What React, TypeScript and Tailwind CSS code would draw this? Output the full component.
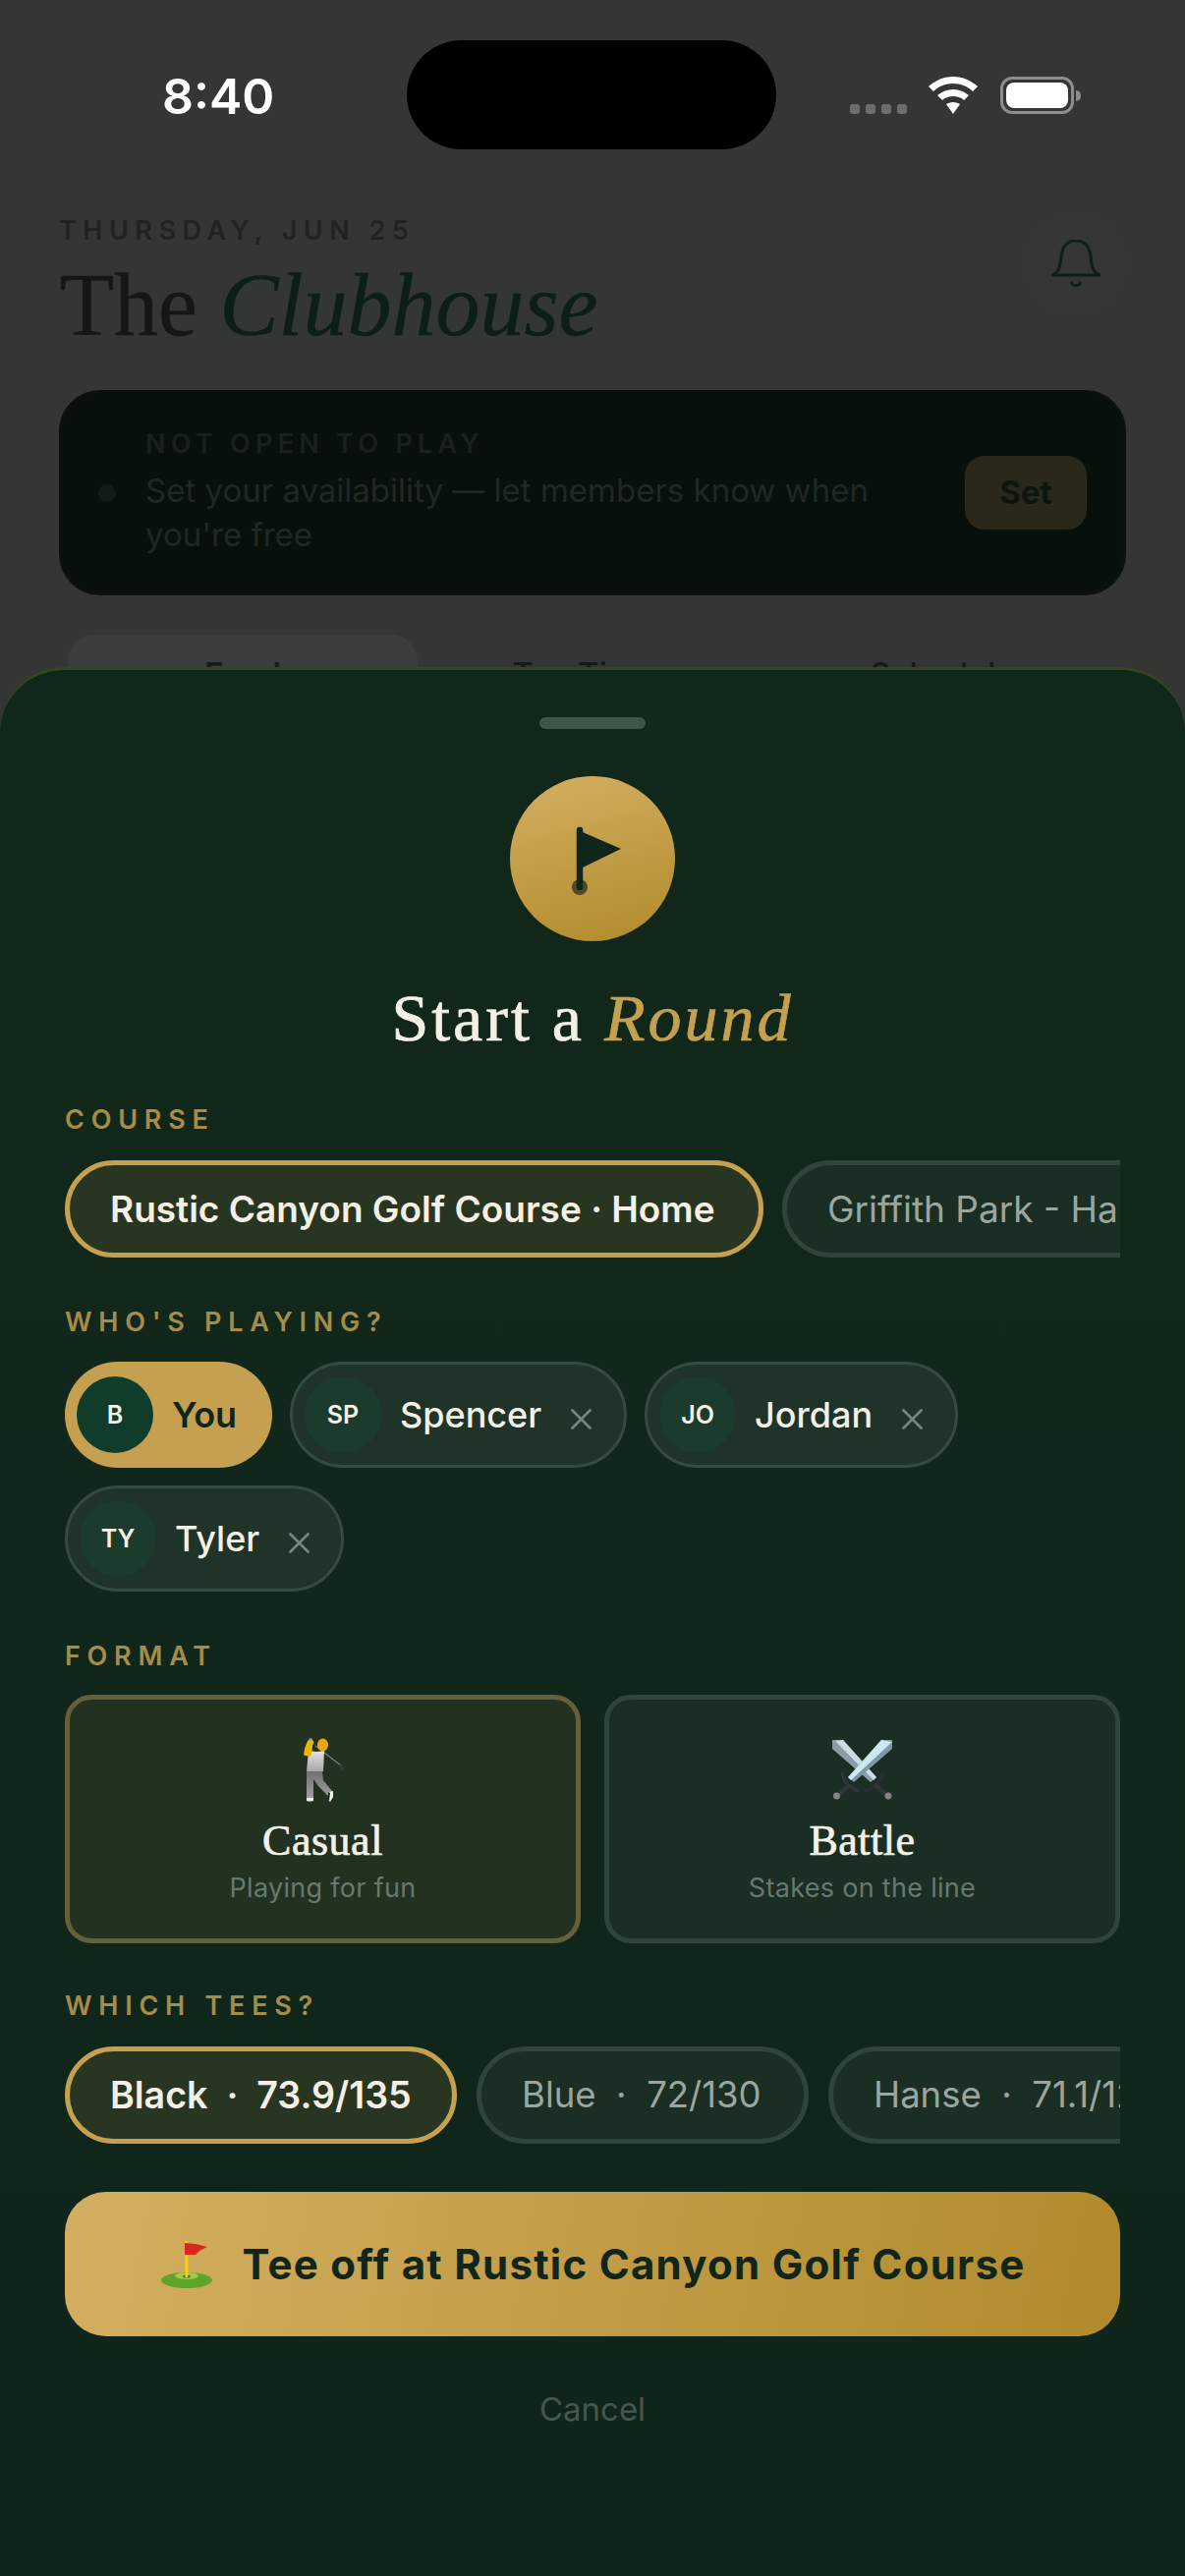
import React from "react";

const F = { fontFamily: '"Inter", "Liberation Sans", sans-serif' };
const S = { fontFamily: '"Liberation Serif", serif' };

function Golfer() {
  return (
    <svg viewBox="0 0 42 65" className="w-[42px] h-[65px]">
      <defs>
        <linearGradient id="shirt" x1="0" y1="0" x2="0" y2="1">
          <stop offset="0" stopColor="#e4e4e2" />
          <stop offset="1" stopColor="#a6a6a6" />
        </linearGradient>
        <linearGradient id="pants" x1="0" y1="0" x2="0" y2="1">
          <stop offset="0" stopColor="#6f7070" />
          <stop offset="1" stopColor="#a2a2a2" />
        </linearGradient>
      </defs>
      <path d="M13 8 L39 28" stroke="#79817f" strokeWidth="1.300" fill="none" />
      <path d="M38 27 l3 1 -.5 5 -2 -.5z" fill="#3a3d42" />
      <path d="M6 13 L14 14 L22 13 L21 34 L4 34z" fill="url(#shirt)" />
      <path d="M4 34 L20 34 L21 43 L30 54 L26 59 L16 49 L11 42 L11 63 L4 63z" fill="url(#pants)" />
      <path d="M4 61 h7 v3 q-4 1 -7 0z" fill="#ecece8" />
      <path d="M27 55 l4 -1 0 6 -3 5 -2 -2z" fill="#f3f3f0" />
      <path d="M26 55 l2 1 -1 8 -1 -1z" fill="#1f2022" />
      <ellipse cx="20.500" cy="7" rx="5.500" ry="6.500" fill="#efa70d" />
      <path d="M5 3 L9 1 L11.500 4 L10 8 L9.500 14 L8 19 L1 17.500 L2 11z" fill="#e8b508" />
      <path d="M6.500 0.500 L9.500 0.500 L10 3 L6.500 3.500z" fill="#a9a99c" />
    </svg>
  );
}

function Swords() {
  return (
    <svg viewBox="0 0 62 62" className="w-[62px] h-[62px]">
      <path d="M0 0 L11 0 L45 38 L39 43 L0 9z" fill="#8a9da6" />
      <path d="M3 1 L42 41 L45 38 L11 0z" fill="#c9dbe3" />
      <path d="M10 33 C11 42 17 49 28 52" stroke="#33343b" strokeWidth="3" fill="none" />
      <path d="M51 33 C50 42 44 49 33 52" stroke="#2b2c33" strokeWidth="3" fill="none" />
      <path d="M43 45 L55 56" stroke="#33343b" strokeWidth="4.500" />
      <path d="M18 45 L7 56" stroke="#33343b" strokeWidth="4.500" />
      <circle cx="57" cy="57" r="3.500" fill="#8b7f83" />
      <circle cx="4.500" cy="57" r="3.500" fill="#8b7f83" />
      <path d="M61 0 L50 0 L16 38 L22 43 L61 9z" fill="#7f98a5" />
      <path d="M50 0 L16 38 L19 41 L61 2z" fill="#cfe7f2" />
    </svg>
  );
}

function FlagHole() {
  return (
    <svg viewBox="0 0 56 48" className="w-[56px] h-[48px]">
      <ellipse cx="28" cy="40" rx="26" ry="8" fill="#5da52a" />
      <ellipse cx="28" cy="35.500" rx="12" ry="3.500" fill="#9fcb4a" />
      <ellipse cx="28" cy="36" rx="4" ry="1.500" fill="#55702a" />
      <rect x="26.500" y="0" width="2.800" height="37" fill="#f6cf10" />
      <path d="M26 2 L37 3 L49 6 L41 10 L37 14 L26 14z" fill="#d9261f" />
    </svg>
  );
}

function X() {
  return (
    <svg viewBox="0 0 21 21" className="w-[21px] h-[21px] shrink-0 mt-[8px]" fill="none" stroke="#75867c" strokeWidth="2.600" strokeLinecap="round">
      <path d="M1.500 1.500 L19.500 19.500 M19.500 1.500 L1.500 19.500" />
    </svg>
  );
}

function Label({ children }: { children: React.ReactNode }) {
  return <div className="text-[27px] leading-[33px] font-semibold tracking-[6.750px] text-[#a68c49] whitespace-nowrap">{children}</div>;
}

function Player({ initials, name, w, gap }: { initials: string; name: string; w: string; gap: string }) {
  return (
    <div className={`h-[108px] ${w} rounded-full border-[3px] border-[#354a40] bg-[#1f3329] flex items-center pl-[12px] shrink-0`}>
      <div className="w-[78px] h-[78px] rounded-full bg-[#1b3c2c] flex items-center justify-center text-[#f4f0e6] text-[25px] font-semibold leading-none">{initials}</div>
      <div className={`ml-[19px] ${gap} text-[36px] font-medium text-[#f4f0e6] leading-none`}>{name}</div>
      <X />
    </div>
  );
}

function Pill({ active, children, w, size }: { active?: boolean; children: React.ReactNode; w?: string; size?: string }) {
  return (
    <div className={`h-[99px] ${w ?? ""} ${size ?? "text-[37px]"} shrink-0 rounded-full border-[5px] flex items-center pl-[41px] pr-[41px] leading-none whitespace-pre ${active ? "border-[#c4a050] bg-[#283520] text-[#f4f0e6] font-semibold" : "border-[#2f4539] bg-[#1a2e23] text-[#9aa69e] font-normal"}`}>
      {children}
    </div>
  );
}

function FormatCard({ active, icon, title, sub }: { active?: boolean; icon: React.ReactNode; title: string; sub: string }) {
  return (
    <div className={`flex-1 h-[253px] rounded-[27px] border-[5px] flex flex-col items-center ${active ? "border-[#65603a] bg-[#223120]" : "border-[#2f4539] bg-[#1a2e23]"}`}>
      <div className="h-[65px] mt-[39px] flex items-center justify-center">{icon}</div>
      <div style={S} className="mt-[15px] text-[44px] leading-[50px] tracking-[0.5px] text-[#f4f0e6] [-webkit-text-stroke:0.7px_currentColor]">{title}</div>
      <div className="mt-[7px] text-[27px] leading-[32px] tracking-[0.3px] text-[#68796e]">{sub}</div>
    </div>
  );
}

export default function App() {
  return (
    <div style={F} className="w-[1206px] h-[2622px] bg-[#343634] flex flex-col overflow-hidden relative">
      {/* status bar */}
      <div className="h-[200px] shrink-0 flex relative">
        <div className="absolute left-[165px] top-[67px] text-[50px] leading-[62px] font-semibold text-white">8:40</div>
        <div className="absolute left-[414px] top-[41px] w-[376px] h-[111px] rounded-full bg-black" />
        <div className="absolute left-[865px] top-[106px] flex gap-[6px]">
          <div className="w-[10px] h-[10px] rounded-[3px] bg-[#6c6d6c]" />
          <div className="w-[10px] h-[10px] rounded-[3px] bg-[#6c6d6c]" />
          <div className="w-[10px] h-[10px] rounded-[3px] bg-[#6c6d6c]" />
          <div className="w-[10px] h-[10px] rounded-[3px] bg-[#6c6d6c]" />
        </div>
        <svg viewBox="0 0 50 38" className="absolute left-[945px] top-[78px] w-[50px] h-[38px]" fill="white">
          <path d="M25 0 C15 0 7 4 0 10 L5 15 C10 10 17 7 25 7 C33 7 40 10 45 15 L50 10 C43 4 35 0 25 0z" />
          <path d="M25 13 C19 13 14 15 9 19 L14 24 C17 21 21 20 25 20 C29 20 33 21 36 24 L41 19 C36 15 31 13 25 13z" />
          <path d="M25 26 C22 26 20 27 18 28 L25 38 L32 28 C30 27 28 26 25 26z" />
        </svg>
        <div className="absolute left-[1018px] top-[78px] w-[75px] h-[38px] rounded-[12px] border-[3px] border-[#8c8d8c] p-[3px]">
          <div className="w-full h-full rounded-[8px] bg-white" />
        </div>
        <div className="absolute left-[1095px] top-[92px] w-[5px] h-[11px] rounded-r-full bg-[#8c8d8c]" />
      </div>

      {/* page behind */}
      <div className="px-[60px] flex items-start justify-between shrink-0">
        <div>
          <div className="mt-[19px] text-[27px] leading-[32px] font-semibold tracking-[6.500px] text-[#212321]">THURSDAY, JUN 25</div>
          <div style={S} className="mt-[15px] ml-[1px] text-[90px] leading-[90px] text-[#151715] whitespace-nowrap [-webkit-text-stroke:0.5px_currentColor]">The <span className="italic text-[#0c1f17]">Clubhouse</span></div>
        </div>
        <div className="mt-[17px] w-[102px] h-[102px] rounded-full bg-[#353735] flex items-center justify-center">
          <svg viewBox="0 0 50 48" className="w-[50px] h-[48px]" fill="none" stroke="#0d1f17" strokeWidth="3" strokeLinecap="round" strokeLinejoin="round">
            <path d="M1 36 C8 33 9 27 10 17 C11 6 17 1 25 1 C33 1 39 6 40 17 C41 27 42 33 49 36z" />
            <path d="M20.500 44 C22 47.500 28 47.500 29.500 44" />
          </svg>
        </div>
      </div>

      <div className="mx-[60px] mt-[41px] h-[209px] rounded-[42px] border-[3px] border-[#0b120e] bg-[#07100b] flex items-center pl-[37px] pr-[37px] shrink-0">
        <div className="w-[18px] h-[18px] rounded-full bg-[#131b16] shrink-0" />
        <div className="ml-[30px] flex-1">
          <div className="text-[27px] leading-[30px] font-semibold tracking-[5.250px] text-[#1a211c]">NOT OPEN TO PLAY</div>
          <div className="mt-[10px] text-[33px] leading-[45px] text-[#1f2822] w-[760px]">Set your availability — let members know when you're free</div>
        </div>
        <div className="w-[124px] h-[75px] rounded-[20px] bg-[#29281a] flex items-center justify-center text-[33px] font-bold text-[#0c1510]">Set</div>
      </div>

      <div className="mx-[69px] mt-[40px] h-[60px] flex shrink-0 text-[33px] text-[#171a18]">
        <div className="flex-1 rounded-t-[27px] bg-[#393e3d] text-center pt-[16px] font-semibold">Feed</div>
        <div className="flex-1 text-center pt-[16px] font-medium">Tee Times</div>
        <div className="flex-1 text-center pt-[16px] font-medium">Schedule</div>
      </div>

      {/* sheet */}
      <div className="absolute left-0 top-[679px] w-[1206px] h-[1943px] rounded-t-[66px] bg-[linear-gradient(180deg,#10281a,#10251a)] border-t-[3px] border-[#35451f] flex flex-col items-center">
        <div className="mt-[48px] w-[108px] h-[12px] rounded-full bg-[#3f5548]" />
        <div className="mt-[48px] w-[168px] h-[168px] rounded-full bg-[linear-gradient(165deg,#d4af62,#b08a2a)] flex items-center justify-center">
          <svg viewBox="0 0 168 168" className="w-[168px] h-[168px]">
            <circle cx="71" cy="113" r="8" fill="#4e4a26" />
            <path d="M71 55 V113" stroke="#10261a" strokeWidth="6.500" strokeLinecap="round" />
            <path d="M74 57 L113 74 L74 93z" fill="#10261a" />
          </svg>
        </div>
        <div style={S} className="mt-[38px] text-[68px] leading-[80px] tracking-[3px] text-[#f4f0e6] whitespace-nowrap [-webkit-text-stroke:0.7px_currentColor]">
          Start a <span className="italic text-[#c4a050]">Round</span>
        </div>

        <div className="self-stretch px-[66px] flex flex-col mt-[47px]">
          <Label>COURSE</Label>
          <div className="mt-[25px] flex gap-[19px] overflow-hidden">
            <Pill active w="w-[711px]">Rustic Canyon Golf Course · Home</Pill>
            <Pill>Griffith Park - Harding</Pill>
          </div>

          <div className="mt-[49px]"><Label>WHO'S PLAYING?</Label></div>
          <div className="mt-[24px] flex flex-wrap gap-[18px] w-[1074px]">
            <div className="h-[108px] w-[211px] rounded-full bg-[#c4a050] flex items-center pl-[12px] shrink-0">
              <div className="w-[78px] h-[78px] rounded-full bg-[#0f3d2a] flex items-center justify-center text-[#f4f0e6] text-[25px] font-semibold leading-none">B</div>
              <div className="ml-[19px] text-[36px] font-semibold text-[#10261a] leading-none">You</div>
            </div>
            <Player initials="SP" name="Spencer" w="w-[343px]" gap="mr-[30px]" />
            <Player initials="JO" name="Jordan" w="w-[319px]" gap="mr-[30px]" />
            <Player initials="TY" name="Tyler" w="w-[284px]" gap="mr-[30px]" />
          </div>

          <div className="mt-[49px]"><Label>FORMAT</Label></div>
          <div className="mt-[23px] flex gap-[24px]">
            <FormatCard active icon={<Golfer />} title="Casual" sub="Playing for fun" />
            <FormatCard icon={<Swords />} title="Battle" sub="Stakes on the line" />
          </div>

          <div className="mt-[47px]"><Label>WHICH TEES?</Label></div>
          <div className="mt-[25px] flex gap-[20px] overflow-hidden">
            <Pill active w="w-[399px]" size="text-[37.600px]">Black  ·  73.9/135</Pill>
            <Pill w="w-[338px]" size="text-[36.500px]">Blue  ·  72/130</Pill>
            <Pill size="text-[36.500px]">Hanse  ·  71.1/128</Pill>
          </div>

          <div className="mt-[49px] h-[147px] rounded-[42px] bg-[linear-gradient(100deg,#d4af62,#b08a2a)] flex items-center justify-center">
            <div className="mr-[28px]"><FlagHole /></div>
            <div className="text-[42px] font-bold tracking-[1.260px] text-[#10261a] leading-none whitespace-nowrap">Tee off at Rustic Canyon Golf Course</div>
          </div>

          <div className="mt-[54px] text-center text-[33px] leading-[40px] text-[#44574c]">Cancel</div>
        </div>
      </div>
    </div>
  );
}
